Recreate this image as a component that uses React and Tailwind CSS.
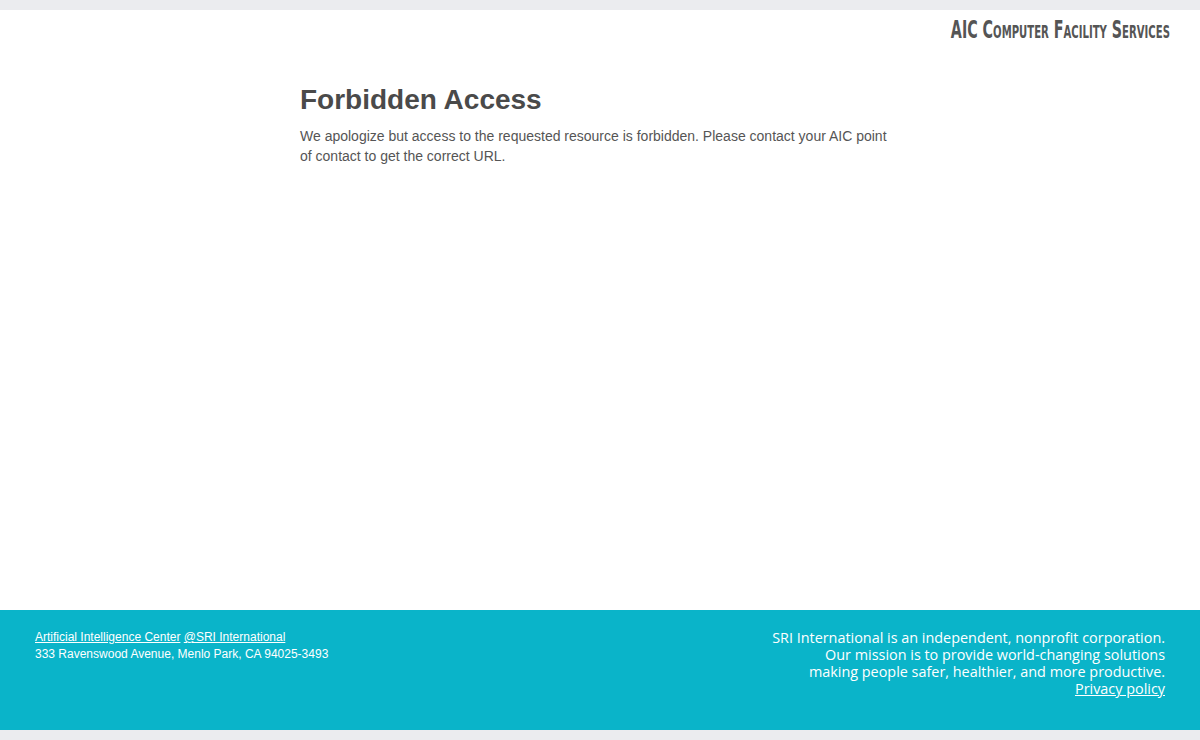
export default function App() {
  return (
    <div className="min-h-screen flex flex-col bg-[#ebecef]">
      {/* top strip */}
      <div className="h-[10px] bg-[#ebecef]" />

      <div className="bg-white h-[600px] flex flex-col">
        <header className="flex justify-end pr-[30px] pt-[6px]">
          <span
            className="text-[#555] text-[24px] leading-[28px] font-bold scale-x-[0.66] origin-right inline-block whitespace-nowrap"
            style={{ fontFamily: '"DejaVu Sans Condensed", "Liberation Sans Narrow", sans-serif', fontVariant: 'small-caps', fontStretch: 'condensed' }}
          >
            AIC Computer Facility Services
          </span>
        </header>

        <main className="w-[600px] ml-[300px] mt-[38px] font-['Liberation_Sans',Arial,sans-serif]">
          <h1 className="text-[28px] leading-[36px] font-bold text-[#4a4a4a]">Forbidden Access</h1>
          <p className="mt-[8px] text-[14px] leading-[20px] text-[#555]">
            We apologize but access to the requested resource is forbidden. Please contact your AIC point of contact to get the correct URL.
          </p>
        </main>
      </div>

      <footer className="h-[120px] bg-[#0ab4c9] text-white flex justify-between px-[35px] pt-[19px]">
        <div className="font-['Liberation_Sans',Arial,sans-serif] text-[12px] leading-[17px]">
          <div>
            <a href="#" className="underline">Artificial Intelligence Center</a>{' '}
            <a href="#" className="underline">@SRI International</a>
          </div>
          <div>333 Ravenswood Avenue, Menlo Park, CA 94025-3493</div>
        </div>
        <div className="font-['Open_Sans','Noto_Sans',sans-serif] text-[14.4px] leading-[17px] text-right">
          <div>SRI International is an independent, nonprofit corporation.</div>
          <div>Our mission is to provide world-changing solutions</div>
          <div>making people safer, healthier, and more productive.</div>
          <div>
            <a href="#" className="underline">Privacy policy</a>
          </div>
        </div>
      </footer>

      <div className="h-[10px] bg-[#ebecef]" />
    </div>
  )
}
